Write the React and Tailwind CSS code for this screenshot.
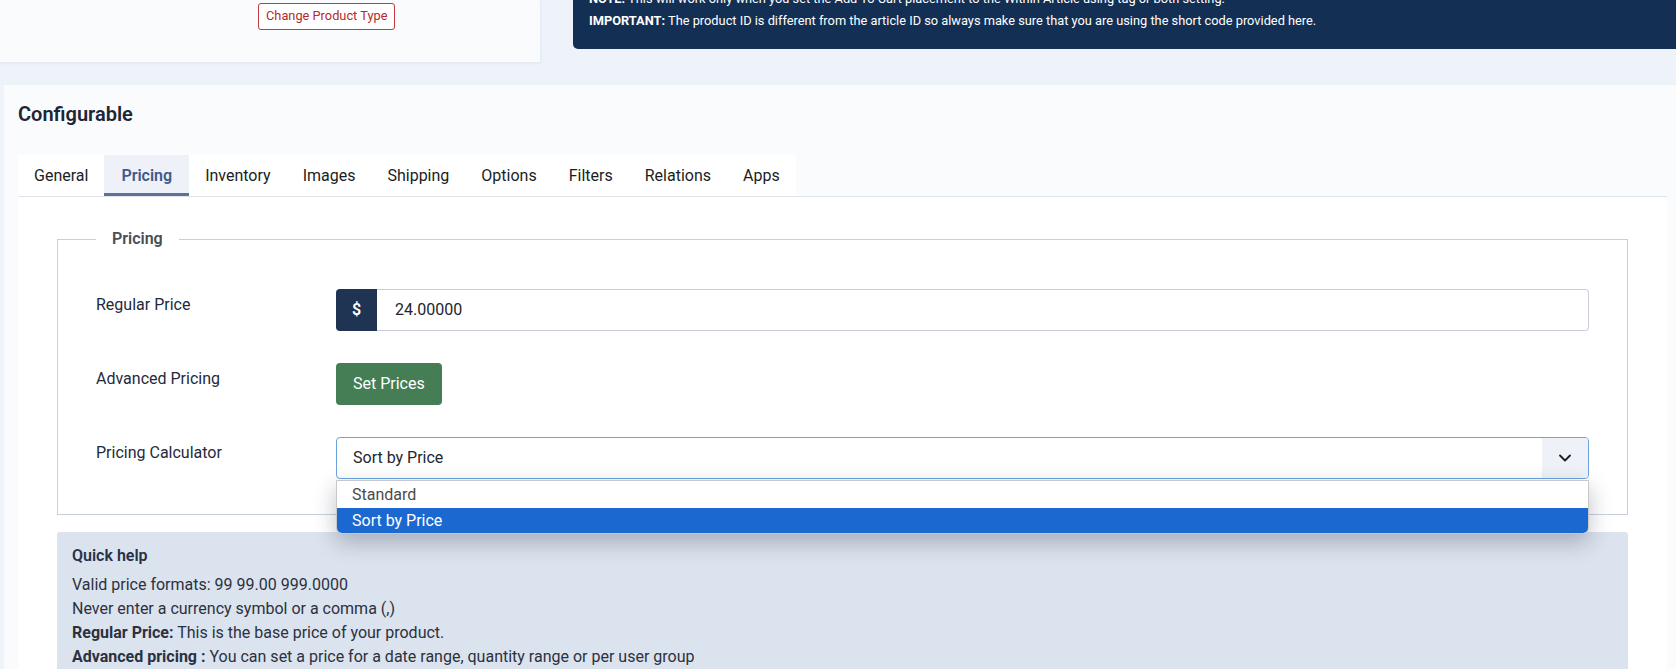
import { ChevronDown } from "lucide-react";

const tabs = ["General", "Pricing", "Inventory", "Images", "Shipping", "Options", "Filters", "Relations", "Apps"];

export default function App() {
  return (
    <div className="min-h-screen bg-[#eef2f9] font-['Roboto','Liberation_Sans',sans-serif] text-[#22262e] overflow-hidden">
      {/* top row */}
      <div className="flex items-start">
        <div className="w-[540px] h-[62px] bg-[#f9fbfd] shadow-[0_1px_3px_rgba(30,50,90,0.08)] pl-[258px] pt-[3px]">
          <button className="h-[27px] px-[7px] border border-[#c33a3a] rounded-[3px] text-[12.8px] text-[#b52b2b] bg-white leading-none">
            Change Product Type
          </button>
        </div>
        <div className="ml-[33px] flex-1 h-[49px] bg-[#132f54] rounded-bl-[5px] pl-[16px] text-[12.8px] text-white overflow-hidden">
          <p className="leading-[22px] -mt-[12px]">
            <b>NOTE:</b> This will work only when you set the Add To Cart placement to the Within Article using tag or both setting.
          </p>
          <p className="leading-[22px]">
            <b>IMPORTANT:</b> The product ID is different from the article ID so always make sure that you are using the short code provided here.
          </p>
        </div>
      </div>

      {/* main card */}
      <div className="mt-[23px] ml-[4px] bg-[#fafbfd] pl-[14px] pr-[9px] pb-8">
        <h2 className="pt-[16px] text-[20px] font-semibold leading-[26px] text-[#1c2636]">Configurable</h2>

        <div className="mt-[28px] flex border-b border-[#dfe3ea]">
          <div className="flex bg-white">
            {tabs.map((t) =>
              t === "Pricing" ? (
                <div
                  key={t}
                  className="h-[41px] px-[17px] flex items-center bg-[#eef2f8] border-b-[3px] border-[#5d719b] text-[16px] font-semibold text-[#41598a] pt-[3px]"
                >
                  {t}
                </div>
              ) : (
                <div key={t} className="h-[41px] px-[16px] flex items-center text-[16px] text-[#1a1d22]">
                  {t}
                </div>
              )
            )}
          </div>
        </div>

        <div className="bg-white px-[39px] pt-[31px] pb-6">
          <fieldset className="border border-[#c9cfdd] px-[38px] pt-[39px] pb-[35px]">
            <legend className="px-[16px] text-[16px] font-semibold leading-[22px] text-[#4a4d55]">Pricing</legend>

            <div className="flex">
              <div className="w-[240px] pt-[5px] text-[16px] leading-[22px] text-[#1e2a3e]">Regular Price</div>
              <div className="flex-1 flex h-[42px]">
                <div className="w-[41px] bg-[#1f3352] rounded-l-[4px] flex items-center justify-center text-white font-semibold text-[16px]">$</div>
                <div className="flex-1 border border-l-0 border-[#c9cfdd] rounded-r-[4px] flex items-center pl-[18px] text-[16px] text-[#22262e]">
                  24.00000
                </div>
              </div>
            </div>

            <div className="flex mt-[32px]">
              <div className="w-[240px] pt-[5px] text-[16px] leading-[22px] text-[#1e2a3e]">Advanced Pricing</div>
              <button className="h-[42px] px-[17px] bg-[#457d54] rounded-[4px] text-white text-[16px]">Set Prices</button>
            </div>

            <div className="flex mt-[32px]">
              <div className="w-[240px] pt-[5px] text-[16px] leading-[22px] text-[#1e2a3e]">Pricing Calculator</div>
              <div className="flex-1 relative">
                <div className="h-[42px] border border-[#6aa3e0] rounded-[4px] flex items-stretch bg-white">
                  <div className="flex-1 flex items-center pl-[16px] text-[16px] text-[#22262e]">Sort by Price</div>
                  <div className="w-[46px] bg-[#eef1f7] rounded-r-[3px] flex items-center justify-center">
                    <ChevronDown size={20} strokeWidth={2.2} className="text-[#1a1d22]" />
                  </div>
                </div>
                <div className="absolute left-0 right-0 top-[43px] z-10 bg-white border border-[#c8c8c8] rounded-b-[6px] overflow-hidden shadow-[0_8px_22px_rgba(20,30,50,0.28)]">
                  <div className="h-[27px] flex items-center pl-[15px] text-[16px] text-[#4b4b4b]">Standard</div>
                  <div className="h-[25px] flex items-center pl-[15px] text-[16px] text-white bg-[#1b68d1]">Sort by Price</div>
                </div>
              </div>
            </div>
          </fieldset>

          <div className="mt-[17px] bg-[#dbe3ee] rounded-t-[3px] pl-[15px] pt-[12px] pb-4 text-[16px] text-[#2b3140]">
            <div className="font-semibold text-[#253248] leading-[24px]">Quick help</div>
            <div className="mt-[5px] leading-[24px]">
              <p>Valid price formats: 99 99.00 999.0000</p>
              <p>Never enter a currency symbol or a comma (,)</p>
              <p>
                <b>Regular Price:</b> This is the base price of your product.
              </p>
              <p>
                <b>Advanced pricing :</b> You can set a price for a date range, quantity range or per user group
              </p>
            </div>
          </div>
        </div>
      </div>
    </div>
  );
}
